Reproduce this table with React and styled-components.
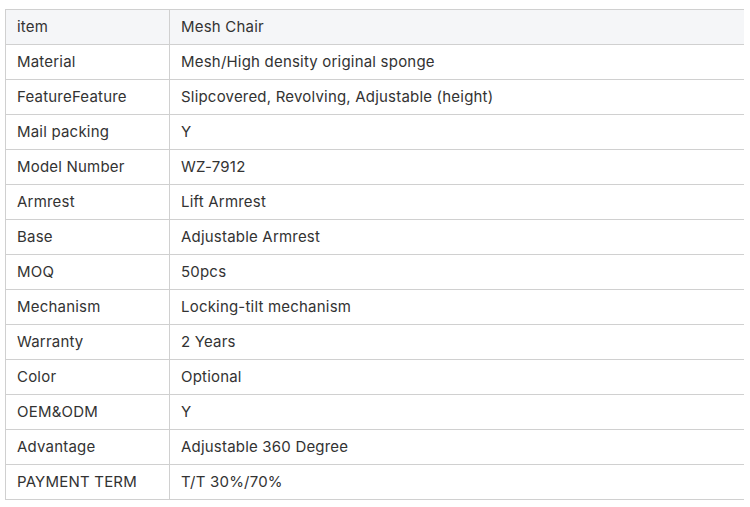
import React from 'react';
import styled, { createGlobalStyle } from 'styled-components';

const GlobalStyle = createGlobalStyle`
  body {
    margin: 0;
    background: #fff;
    font-family: Inter, "Noto Sans", sans-serif;
  }
`;

const Wrap = styled.div`
  padding: 9px 0 0 5px;
  width: 739px;
  overflow: hidden;
`;

const Table = styled.table`
  border-collapse: collapse;
  width: 100%;
  table-layout: fixed;
  font-size: 15px;
  letter-spacing: 0.2px;
  color: #333;
`;

const Row = styled.tr`
  background: ${p => (p.$head ? '#f5f6f8' : '#fff')};
`;

const Cell = styled.td`
  height: 35px;
  padding: 0 11px 1px;
  border: 1px solid #d0d0d0;
  border-right: none;
  white-space: nowrap;
  vertical-align: middle;
  box-sizing: border-box;
  width: ${p => p.$w || 'auto'};
`;

const rows = [
  ['item', 'Mesh Chair'],
  ['Material', 'Mesh/High density original sponge'],
  ['FeatureFeature', 'Slipcovered, Revolving, Adjustable (height)'],
  ['Mail packing', 'Y'],
  ['Model Number', 'WZ-7912'],
  ['Armrest', 'Lift Armrest'],
  ['Base', 'Adjustable Armrest'],
  ['MOQ', '50pcs'],
  ['Mechanism', 'Locking-tilt mechanism'],
  ['Warranty', '2 Years'],
  ['Color', 'Optional'],
  ['OEM&ODM', 'Y'],
  ['Advantage', 'Adjustable 360 Degree'],
  ['PAYMENT TERM', 'T/T 30%/70%'],
];

export default function App() {
  return (
    <>
      <GlobalStyle />
      <Wrap>
        <Table>
          <tbody>
            {rows.map(([k, v], i) => (
              <Row key={k} $head={i === 0}>
                <Cell $w="164px">{k}</Cell>
                <Cell>{v}</Cell>
              </Row>
            ))}
          </tbody>
        </Table>
      </Wrap>
    </>
  );
}
